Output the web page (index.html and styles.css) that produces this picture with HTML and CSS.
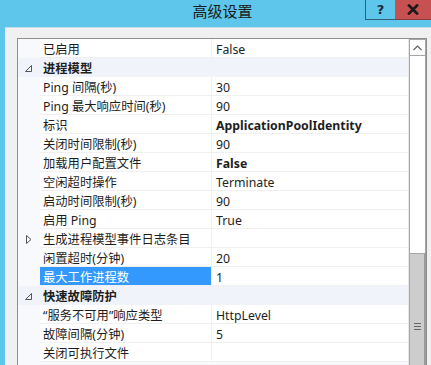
FILE: index.html
```html
<!DOCTYPE html>
<html lang="zh-CN">
<head>
<meta charset="utf-8">
<link rel="stylesheet" href="styles.css">
</head>
<body>
<div class="window">
  <div class="titlebar">
    <div class="title">高级设置</div>
    <div class="controls">
      <div class="btn help">?</div>
      <div class="btn close">
        <svg width="12" height="11" viewBox="0 0 12 11"><path d="M2 1.5 L10 9.5 M10 1.5 L2 9.5" stroke="#1a1a1a" stroke-width="2.6" stroke-linecap="square"/></svg>
      </div>
    </div>
  </div>
  <div class="client">
    <div class="grid">
      <div class="rows">
        <div class="row"><div class="g"></div><div class="n">已启用</div><div class="v">False</div></div>
        <div class="row cat"><div class="g"><svg width="7" height="7" viewBox="0 0 7 7"><path d="M6.5 0.5 L6.5 6.5 L0.5 6.5 Z" fill="none" stroke="#555" stroke-width="1"/></svg></div><div class="n">进程模型</div><div class="v"></div></div>
        <div class="row"><div class="g"></div><div class="n">Ping 间隔(秒)</div><div class="v">30</div></div>
        <div class="row"><div class="g"></div><div class="n">Ping 最大响应时间(秒)</div><div class="v">90</div></div>
        <div class="row"><div class="g"></div><div class="n">标识</div><div class="v b">ApplicationPoolIdentity</div></div>
        <div class="row"><div class="g"></div><div class="n">关闭时间限制(秒)</div><div class="v">90</div></div>
        <div class="row"><div class="g"></div><div class="n">加载用户配置文件</div><div class="v b">False</div></div>
        <div class="row"><div class="g"></div><div class="n">空闲超时操作</div><div class="v">Terminate</div></div>
        <div class="row"><div class="g"></div><div class="n">启动时间限制(秒)</div><div class="v">90</div></div>
        <div class="row"><div class="g"></div><div class="n">启用 Ping</div><div class="v">True</div></div>
        <div class="row"><div class="g"><svg width="6" height="9" viewBox="0 0 6 9"><path d="M0.5 0.5 L5 4.5 L0.5 8.5 Z" fill="none" stroke="#555" stroke-width="1"/></svg></div><div class="n">生成进程模型事件日志条目</div><div class="v"></div></div>
        <div class="row"><div class="g"></div><div class="n">闲置超时(分钟)</div><div class="v">20</div></div>
        <div class="row sel"><div class="g"></div><div class="n">最大工作进程数</div><div class="v">1</div></div>
        <div class="row cat"><div class="g"><svg width="7" height="7" viewBox="0 0 7 7"><path d="M6.5 0.5 L6.5 6.5 L0.5 6.5 Z" fill="none" stroke="#555" stroke-width="1"/></svg></div><div class="n">快速故障防护</div><div class="v"></div></div>
        <div class="row"><div class="g"></div><div class="n">“服务不可用”响应类型</div><div class="v">HttpLevel</div></div>
        <div class="row"><div class="g"></div><div class="n">故障间隔(分钟)</div><div class="v">5</div></div>
        <div class="row"><div class="g"></div><div class="n">关闭可执行文件</div><div class="v"></div></div>
      </div>
      <div class="scrollbar">
        <div class="arrow"><svg width="9" height="6" viewBox="0 0 9 6"><path d="M0.5 5 L4.5 1 L8.5 5" fill="none" stroke="#606060" stroke-width="1.2"/></svg></div>
        <div class="track"></div>
        <div class="thumb"><div class="grip"></div></div>
      </div>
    </div>
  </div>
</div>
</body>
</html>
```
FILE: styles.css
```css
html, body {
  margin: 0;
  padding: 0;
  background: #f0f0f0;
}
body {
  font-family: "Noto Sans", "Noto Sans CJK SC", sans-serif;
  font-size: 12.3px;
  color: #1e1e1e;
}
.window {
  width: 431px;
  height: 365px;
  overflow: hidden;
  display: flex;
  flex-direction: column;
  background: #5ec6ea;
}
.titlebar {
  position: relative;
  height: 27px;
  flex: none;
  display: flex;
  justify-content: center;
  align-items: center;
}
.title {
  font-family: "Noto Sans CJK SC", sans-serif;
  font-size: 15px;
  color: #1a1a1a;
  padding-left: 14px;
  margin-top: -7px;
}
.controls {
  position: absolute;
  top: 0;
  right: 0;
  display: flex;
}
.btn {
  height: 20px;
  display: flex;
  align-items: center;
  justify-content: center;
  box-sizing: border-box;
}
.help {
  width: 30px;
  border: 1px solid #2f5f7a;
  border-top: none;
  border-right: none;
  font-family: "DejaVu Sans", sans-serif;
  font-weight: bold;
  font-size: 13px;
  color: #1a2a3a;
  background: #5ec6ea;
}
.close {
  width: 36px;
  background: #c75050;
  border-bottom: 1px solid #8a3a3a;
}
.client {
  flex: 1;
  margin-left: 5px;
  background: #f0f0f0;
  border-top: 1px solid #c8dde6;
  padding: 10px 4px 0 12px;
  display: flex;
  flex-direction: column;
}
.grid {
  flex: 1;
  border: 1px solid #8e8f91;
  border-bottom: none;
  background: #fff;
  display: flex;
}
.rows {
  flex: 1;
  display: flex;
  flex-direction: column;
  background: #f7f9fc;
}
.row {
  display: grid;
  grid-template-columns: 22px 172px 1fr;
  height: 19px;
  flex: none;
}
.g {
  display: flex;
  align-items: center;
  justify-content: center;
  padding-right: 1px;
  padding-top: 1px;
}
.n, .v {
  background: #fff;
  border-bottom: 1px solid #f0f0f0;
  box-sizing: border-box;
  padding-top: 3px;
  line-height: 15px;
  white-space: nowrap;
  overflow: hidden;
}
.n {
  padding-left: 3px;
  border-right: 1px solid #f0f0f0;
}
.v {
  padding-left: 4px;
}
.b {
  font-weight: bold;
}
.row.cat {
  background: #f0f4fa;
}
.row.cat .n, .row.cat .v {
  background: #f0f4fa;
  border-color: #f0f4fa;
  font-weight: bold;
}
.row.sel .n {
  background: #3399ff;
  color: #fff;
  border-right-color: #e8f0f8;
}
.scrollbar {
  width: 17px;
  flex: none;
  display: flex;
  flex-direction: column;
  background: #fff;
  border-left: 1px solid #e8e8e8;
}
.arrow {
  height: 17px;
  box-sizing: border-box;
  border: 1px solid #a6a6a6;
  background: #fff;
  display: flex;
  align-items: center;
  justify-content: center;
}
.track {
  height: 197px;
  flex: none;
  border-left: 1px solid #a6a6a6;
  border-right: 1px solid #a6a6a6;
}
.thumb {
  flex: 1;
  background: #cdcdcd;
  border-left: 1px solid #a6a6a6;
  border-right: 2px solid #9a9a9a;
  border-top: 1px solid #a6a6a6;
  display: flex;
  justify-content: center;
  padding-top: 69px;
}
.grip {
  width: 7px;
  height: 5px;
  border-top: 1px solid #666;
  border-bottom: 1px solid #666;
  position: relative;
}
.grip::after {
  content: "";
  position: absolute;
  left: 0;
  right: 0;
  top: 2px;
  border-top: 1px solid #666;
}
```
